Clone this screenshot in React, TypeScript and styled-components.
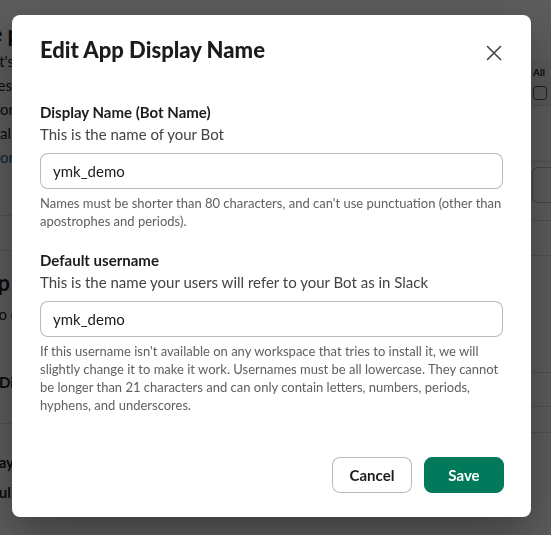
import React from "react";
import styled, { createGlobalStyle } from "styled-components";

const Global = createGlobalStyle`
  html, body { margin: 0; padding: 0; }
  body {
    font-family: Lato, "Noto Sans", "Liberation Sans", sans-serif;
    background: #ffffff;
    color: #1d1c1d;
    -webkit-font-smoothing: antialiased;
  }
  * { box-sizing: border-box; }
`;

/* ---------- background page (dimmed) ---------- */

const Page = styled.div`
  width: 551px;
  height: 535px;
  overflow: hidden;
  display: flex;
  background: #ffffff;
`;

const LeftCol = styled.div`
  width: 40px;
  flex: none;
  display: flex;
  flex-direction: column;
`;

const Middle = styled.div`
  flex: 1;
  display: flex;
  flex-direction: column;
`;

const RightCol = styled.div`
  width: 30px;
  flex: none;
  display: flex;
  flex-direction: column;
`;

const BgRow = styled.div<{ $end: number; $top?: number; $size?: number; $bold?: boolean; $link?: boolean; $lh?: number }>`
  width: ${(p) => p.$end}px;
  margin-top: ${(p) => p.$top ?? 0}px;
  display: flex;
  justify-content: flex-end;
  white-space: nowrap;
  font-size: ${(p) => p.$size ?? 15}px;
  line-height: ${(p) => p.$lh ?? 24}px;
  font-weight: ${(p) => (p.$bold ? 700 : 400)};
  color: ${(p) => (p.$link ? "#1264a3" : "#1d1c1d")};
`;

const BgRule = styled.div<{ $top: number }>`
  margin-top: ${(p) => p.$top}px;
  height: 1px;
  background: #dddddd;
`;

const TableHead = styled.div`
  margin-top: 60px;
  height: 46px;
  background: #f4f4f4;
  border-bottom: 1px solid #dddddd;
  padding: 6px 0 0 12px;
  display: flex;
  flex-direction: column;
  gap: 8px;
  font-size: 10px;
  font-weight: 700;
`;

const Check = styled.div`
  width: 14px;
  height: 14px;
  border: 1px solid #555;
  border-radius: 3px;
`;

const Dash = styled.div`
  margin-top: 20px;
  width: 8px;
  height: 3px;
  background: #333;
`;

const InputBox = styled.div`
  margin-top: 5px;
  margin-left: 11px;
  height: 36px;
  border: 1px solid #bbbbbb;
  border-right: none;
  border-radius: 6px 0 0 6px;
`;

/* ---------- overlay and modal ---------- */

const Overlay = styled.div`
  position: fixed;
  inset: 0;
  background: rgba(0, 0, 0, 0.64);
  padding: 15px 0 0 12px;
  display: flex;
  align-items: flex-start;
`;

const Modal = styled.div`
  width: 519px;
  height: 502px;
  background: #ffffff;
  border-radius: 8px;
  box-shadow: 0 18px 48px rgba(0, 0, 0, 0.35);
  display: flex;
  flex-direction: column;
`;

const Header = styled.div`
  height: 70px;
  padding: 0 19px 0 28px;
  display: flex;
  align-items: center;
  justify-content: space-between;
`;

const Title = styled.h1`
  margin: 0;
  font-size: 22px;
  line-height: 28px;
  font-weight: 900;
  color: #1d1c1d;
`;

const CloseButton = styled.button`
  width: 36px;
  height: 36px;
  margin-top: 6px;
  border: none;
  background: transparent;
  padding: 0;
  display: flex;
  align-items: center;
  justify-content: center;
  color: #454245;
  cursor: pointer;
`;

const Body = styled.div`
  padding: 16px 28px 0 28px;
  display: flex;
  flex-direction: column;
`;

const Field = styled.div<{ $gap?: number }>`
  margin-top: ${(p) => p.$gap ?? 0}px;
  display: flex;
  flex-direction: column;
`;

const Label = styled.label`
  font-size: 15px;
  line-height: 22px;
  font-weight: 700;
  color: #1d1c1d;
`;

const Helper = styled.div`
  font-size: 15px;
  line-height: 22px;
  color: #454245;
`;

const Input = styled.input`
  margin-top: 8px;
  width: 100%;
  height: 36px;
  border: 1px solid rgba(29, 28, 29, 0.3);
  border-radius: 8px;
  padding: 0 12px;
  font-family: inherit;
  font-size: 15px;
  color: #1d1c1d;
  background: #ffffff;
  outline: none;
`;

const Hint = styled.div`
  margin-top: 5px;
  font-size: 13px;
  line-height: 18px;
  color: #616061;
`;

const Footer = styled.div`
  margin-top: auto;
  padding: 0 27px 24px 28px;
  display: flex;
  justify-content: flex-end;
  gap: 12px;
`;

const Button = styled.button<{ $primary?: boolean }>`
  height: 36px;
  min-width: 80px;
  padding: 0 16px;
  border-radius: 8px;
  font-family: inherit;
  font-size: 15px;
  font-weight: 700;
  cursor: pointer;
  border: 1px solid ${(p) => (p.$primary ? "#007a5a" : "rgba(29, 28, 29, 0.3)")};
  background: ${(p) => (p.$primary ? "#007a5a" : "#ffffff")};
  color: ${(p) => (p.$primary ? "#ffffff" : "#1d1c1d")};
`;

export default function App() {
  return (
    <>
      <Global />
      <Page>
        <LeftCol>
          <BgRow $end={20} $top={20} $size={22} $bold $lh={28}>
            Home p
          </BgRow>
          <BgRow $end={14} $top={1}>Bot's</BgRow>
          <BgRow $end={12}>features</BgRow>
          <BgRow $end={14}>for</BgRow>
          <BgRow $end={11}>general</BgRow>
          <BgRow $end={14} $link>for</BgRow>
          <BgRule $top={46} />
          <BgRule $top={34} />
          <BgRow $end={10} $top={18} $size={22} $bold $lh={28}>
            App
          </BgRow>
          <BgRow $end={18} $top={5}>to c</BgRow>
          <BgRow $end={14} $top={44} $bold>Di</BgRow>
          <BgRule $top={29} />
          <BgRow $end={14} $top={26} $bold>Display</BgRow>
          <BgRow $end={11} $top={6} $bold>Defaul</BgRow>
        </LeftCol>
        <Middle />
        <RightCol>
          <TableHead>
            <div>All</div>
            <Check />
          </TableHead>
          <Dash />
          <BgRule $top={32} />
          <InputBox />
          <BgRule $top={17} />
          <BgRule $top={34} />
          <BgRule $top={116} />
          <BgRule $top={33} />
          <BgRule $top={25} />
        </RightCol>
      </Page>

      <Overlay>
        <Modal role="dialog" aria-label="Edit App Display Name">
          <Header>
            <Title>Edit App Display Name</Title>
            <CloseButton aria-label="Close">
              <svg width="16" height="16" viewBox="0 0 16 16" fill="none">
                <path d="M1.5 1.5 L14.5 14.5 M14.5 1.5 L1.5 14.5" stroke="currentColor" strokeWidth="1.6" strokeLinecap="round" />
              </svg>
            </CloseButton>
          </Header>
          <Body>
            <Field>
              <Label>Display Name (Bot Name)</Label>
              <Helper>This is the name of your Bot</Helper>
              <Input defaultValue="ymk_demo" />
              <Hint>
                Names must be shorter than 80 characters, and can't use punctuation (other than
                apostrophes and periods).
              </Hint>
            </Field>
            <Field $gap={19}>
              <Label>Default username</Label>
              <Helper>This is the name your users will refer to your Bot as in Slack</Helper>
              <Input defaultValue="ymk_demo" />
              <Hint>
                If this username isn't available on any workspace that tries to install it, we will
                slightly change it to make it work. Usernames must be all lowercase. They cannot be
                longer than 21 characters and can only contain letters, numbers, periods, hyphens,
                and underscores.
              </Hint>
            </Field>
          </Body>
          <Footer>
            <Button>Cancel</Button>
            <Button $primary>Save</Button>
          </Footer>
        </Modal>
      </Overlay>
    </>
  );
}
